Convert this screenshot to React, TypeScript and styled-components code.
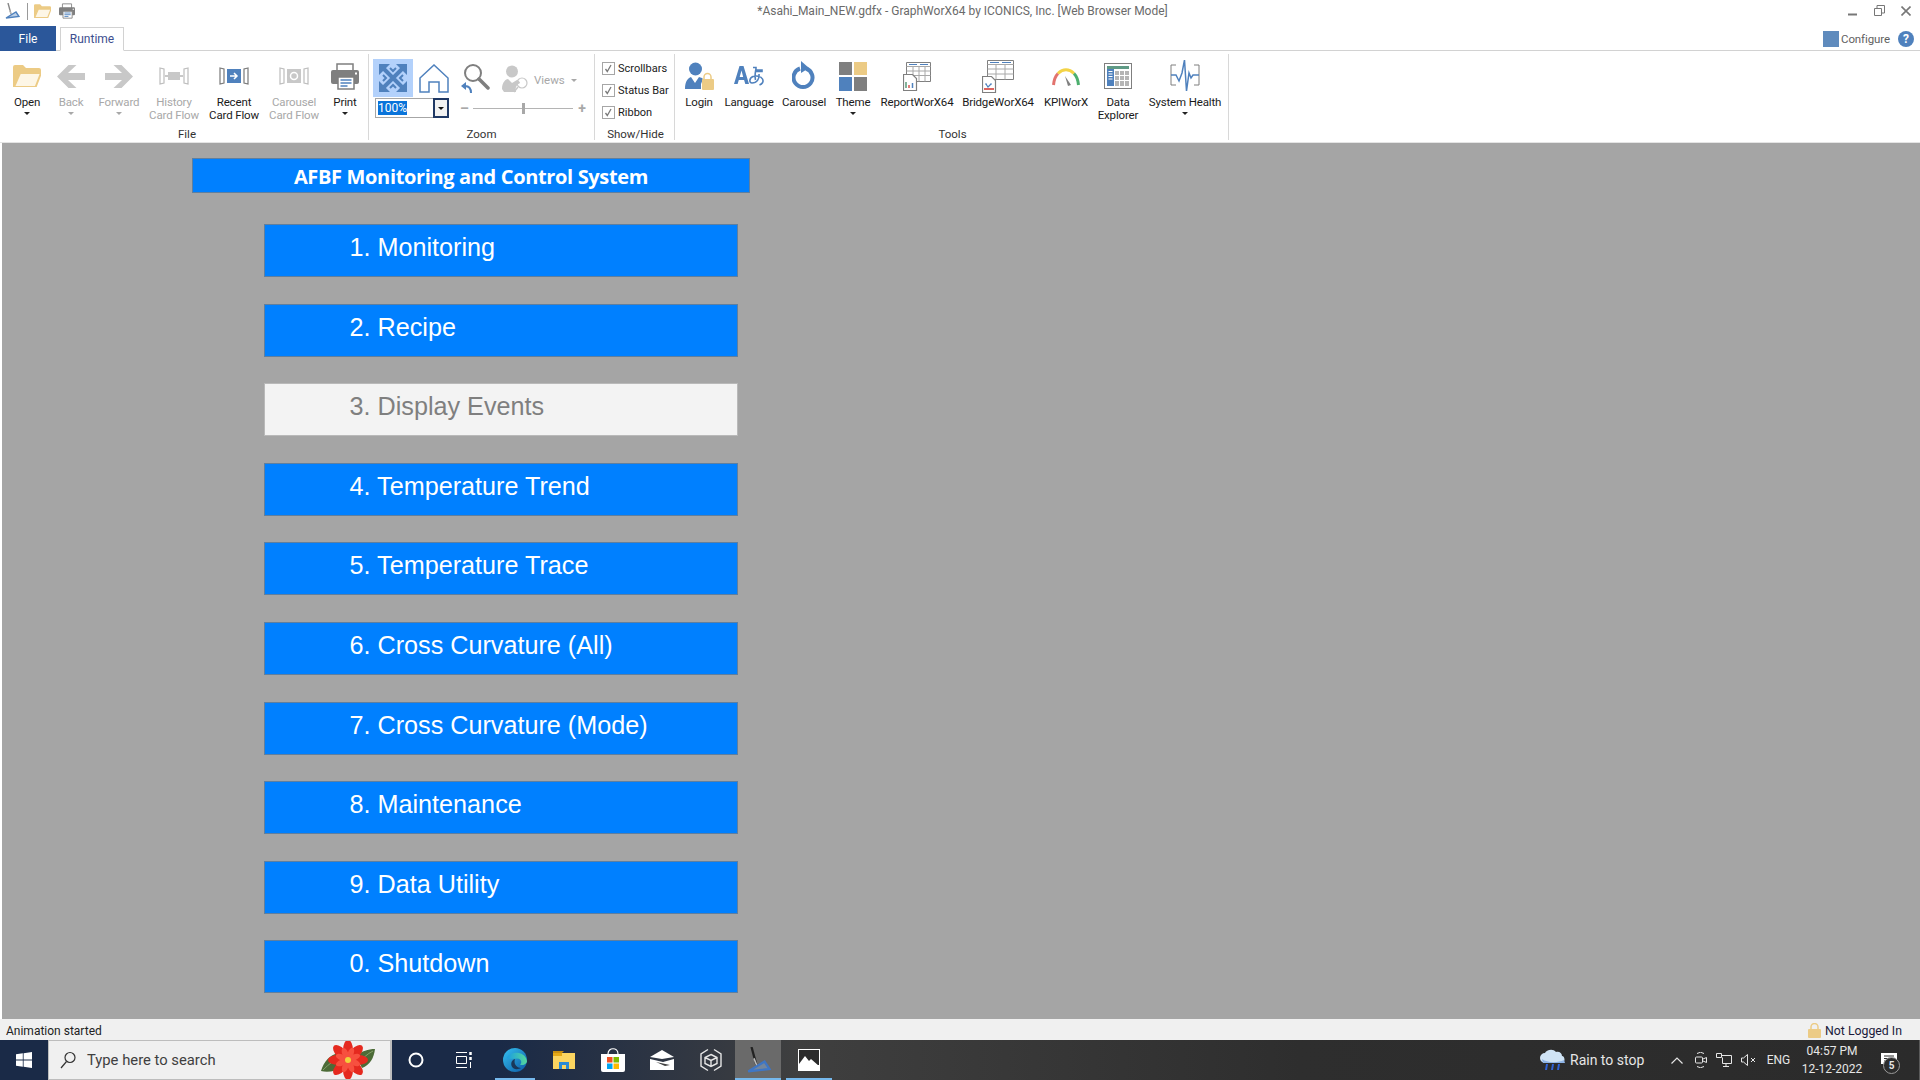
import React from 'react'
import styled, { createGlobalStyle } from 'styled-components'

const UI_FONT = 'Roboto, "Liberation Sans", sans-serif'
const BLUE = '#4f81bd'
const GREY = '#7f7f7f'
const OFF = '#c8c8c8'
const GOLD = '#eccb85'

const Global = createGlobalStyle`
  html, body {
    margin: 0;
    padding: 0;
    overflow: hidden;
    background: #fff;
  }
  svg {
    display: block;
  }
`

const Window = styled.div`
  width: 1920px;
  height: 1080px;
  display: flex;
  flex-direction: column;
  font-family: ${UI_FONT};
  font-size: 12px;
  color: #1a1a1a;
  background: #fff;
`

const TitleBar = styled.div`
  height: 26px;
  display: grid;
  grid-template-columns: 1fr auto 1fr;
  align-items: center;
`

const QuickAccess = styled.div`
  display: flex;
  align-items: center;
  gap: 8px;
  padding-left: 4px;
  margin-top: -4px;
`

const QuickDivider = styled.div`
  width: 1px;
  height: 17px;
  background: #9a9a9a;
  margin: 0 -2px 0 -1px;
`

const WindowTitle = styled.div`
  font-size: 12px;
  color: #6a6a6a;
  padding-left: 5px;
  margin-top: -5px;
`

const WindowButtons = styled.div`
  display: flex;
  justify-content: flex-end;
  align-items: center;
  gap: 16px;
  padding-right: 9px;
  margin-top: -5px;
`

const TabRow = styled.div`
  height: 25px;
  box-sizing: border-box;
  display: flex;
  align-items: flex-end;
  border-bottom: 1px solid #d2d2d2;
`

const FileTab = styled.div`
  width: 56px;
  height: 25px;
  margin-bottom: -1px;
  background: #2b579a;
  color: #fff;
  display: flex;
  align-items: center;
  justify-content: center;
`

const RuntimeTab = styled.div`
  width: 64px;
  height: 24px;
  box-sizing: border-box;
  margin: 0 0 -1px 4px;
  border: 1px solid #d2d2d2;
  border-bottom: 1px solid #fff;
  color: #3d4f8f;
  display: flex;
  align-items: center;
  justify-content: center;
`

const Configure = styled.div`
  margin-left: auto;
  display: flex;
  align-items: center;
  padding: 0 6px 3px 0;
  color: #5f5f5f;
  font-size: 11.5px;
  letter-spacing: -0.1px;
`

const ConfigureSwatch = styled.div`
  width: 16px;
  height: 16px;
  background: #5f8bbd;
  margin-right: 2px;
`

const HelpBadge = styled.div`
  width: 16px;
  height: 16px;
  margin-left: 8px;
  border-radius: 50%;
  background: #4f81bd;
  color: #fff;
  font-size: 12px;
  font-weight: 700;
  display: flex;
  align-items: center;
  justify-content: center;
`

const Ribbon = styled.div`
  height: 92px;
  box-sizing: border-box;
  padding-top: 3px;
  display: flex;
  align-items: flex-start;
  border-bottom: 1px solid #e4e4e4;
`

const Group = styled.div<{ $w: number }>`
  width: ${({ $w }) => $w}px;
  height: 86px;
  box-sizing: border-box;
  flex: none;
  display: flex;
  flex-direction: column;
  border-right: 1px solid #d8d8d8;
`

const GroupBody = styled.div<{ $pad?: number }>`
  flex: 1;
  min-height: 0;
  display: flex;
  padding-left: ${({ $pad }) => $pad ?? 0}px;
`

const GroupLabel = styled.div<{ $pad?: number }>`
  height: 16px;
  line-height: 16px;
  margin-bottom: -2px;
  padding-left: ${({ $pad }) => $pad ?? 0}px;
  text-align: center;
  font-size: 11.5px;
  color: #333;
`

const Item = styled.div<{ $w: number; $off?: boolean }>`
  width: ${({ $w }) => $w}px;
  flex: none;
  padding-top: 3px;
  display: flex;
  flex-direction: column;
  align-items: center;
  color: ${({ $off }) => ($off ? '#a8a8a8' : '#1a1a1a')};
`

const IconSlot = styled.div`
  height: 38px;
  display: flex;
  align-items: center;
  justify-content: center;
`

const ItemLabel = styled.div`
  margin-top: 1px;
  font-size: 11.5px;
  line-height: 13px;
  text-align: center;
  white-space: pre-line;
  letter-spacing: -0.15px;
`

const Caret = styled.div<{ $off?: boolean }>`
  width: 0;
  height: 0;
  margin-top: 3px;
  border-left: 3px solid transparent;
  border-right: 3px solid transparent;
  border-top: 3px solid ${({ $off }) => ($off ? '#a8a8a8' : '#222')};
`

const ZoomBody = styled.div`
  padding: 5px 0 0 4px;
  display: flex;
  flex-direction: column;
`

const ZoomTools = styled.div`
  height: 38px;
  display: flex;
  align-items: center;
`

const FitButton = styled.div`
  width: 40px;
  height: 38px;
  background: #b3d1fb;
  display: flex;
  align-items: center;
  justify-content: center;
`

const ZoomCell = styled.div<{ $w: number; $shift?: number }>`
  width: ${({ $w }) => $w}px;
  box-sizing: border-box;
  padding: ${({ $shift }) => $shift ?? 0}px 0 0 ${({ $shift }) => ($shift ?? 0) * 2}px;
  display: flex;
  align-items: center;
  justify-content: center;
`

const ViewsText = styled.span`
  color: #a8a8a8;
  margin: 4px 0 0 1px;
  font-size: 11.5px;
`

const ViewsCaret = styled(Caret)`
  margin: 4px 0 0 6px;
`

const ZoomControls = styled.div`
  height: 20px;
  margin: 1px 0 0 2px;
  display: flex;
  align-items: center;
`

const Combo = styled.div`
  width: 74px;
  height: 20px;
  box-sizing: border-box;
  display: flex;
  border: 1px solid #a6a6a6;
`

const ComboField = styled.div`
  flex: 1;
  padding: 2px 0 0 2px;
`

const ComboValue = styled.span`
  display: inline-block;
  height: 14px;
  line-height: 14px;
  background: #0a74da;
  color: #fff;
  font-size: 12px;
`

const ComboButton = styled.div`
  width: 16px;
  box-sizing: border-box;
  margin: -1px -1px -1px 0;
  border: 2px solid #1f3864;
  background: #f2f2f2;
  display: flex;
  align-items: center;
  justify-content: center;
`

const ComboCaret = styled(Caret)`
  margin: 0;
  border-top-color: #111;
`

const Slider = styled.div`
  margin-left: 11px;
  width: 126px;
  display: flex;
  align-items: center;
  gap: 5px;
  color: #a8a8a8;
  font-weight: 700;
`

const SliderGlyph = styled.span`
  width: 8px;
  text-align: center;
  font-size: 14px;
  line-height: 14px;
`

const SliderTrack = styled.div`
  position: relative;
  flex: 1;
  height: 1px;
  background: #b4b4b4;
`

const SliderThumb = styled.div`
  position: absolute;
  left: 49%;
  top: -5px;
  width: 3px;
  height: 11px;
  background: #a8a8a8;
`

const Checks = styled.div`
  padding: 3px 0 0 7px;
  display: flex;
  flex-direction: column;
`

const CheckRow = styled.div`
  height: 22px;
  display: flex;
  align-items: center;
  gap: 3px;
  font-size: 11px;
`

const CheckBox = styled.div`
  width: 13px;
  height: 13px;
  box-sizing: border-box;
  border: 1px solid #a6a6a6;
  display: flex;
  align-items: center;
  justify-content: center;
`

const Canvas = styled.main`
  flex: 1;
  min-height: 0;
  margin-left: 2px;
  background: #a5a5a5;
  padding: 15px 0 0 190px;
`

const Banner = styled.h1`
  width: 558px;
  height: 35px;
  box-sizing: border-box;
  margin: 0;
  background: #0080ff;
  border: 1px solid #5f7f9f;
  color: #fff;
  font-size: 20px;
  font-weight: 700;
  line-height: 35px;
  text-align: center;
  font-family: "Open Sans", sans-serif;
  letter-spacing: -0.35px;
`

const Menu = styled.nav`
  width: 474px;
  margin: 31px 0 0 72px;
  display: flex;
  flex-direction: column;
  gap: 26.6px;
`

const MenuButton = styled.div<{ $off?: boolean }>`
  height: 53px;
  box-sizing: border-box;
  padding: 7px 0 0 84.500px;
  font-family: "Liberation Sans", Arial, sans-serif;
  font-size: 25.2px;
  line-height: 30px;
  background: ${({ $off }) => ($off ? '#f3f3f3' : '#0080ff')};
  color: ${({ $off }) => ($off ? '#7f7f7f' : '#fff')};
  border: 1px solid ${({ $off }) => ($off ? '#b9b9b9' : '#5f7f9f')};
`

const StatusBar = styled.footer`
  height: 21px;
  box-sizing: border-box;
  background: #f0f0f0;
  display: flex;
  align-items: center;
  justify-content: space-between;
  padding: 2px 18px 0 6px;
  font-size: 12px;
  color: #222;
`

const LoginState = styled.div`
  display: flex;
  align-items: center;
  gap: 4px;
  color: #1a1a3a;
  font-size: 12.3px;
`

const Taskbar = styled.div`
  height: 40px;
  display: flex;
  color: #e6e6e6;
  background: linear-gradient(90deg, #1a2a47 0, #1a2a47 500px, #3f3f3f 800px, #2e2e2e 1300px, #2b2b2b 100%);
`

const StartCell = styled.div`
  width: 48px;
  display: flex;
  align-items: center;
  justify-content: center;
  background: #1a2a47;
`

const SearchBox = styled.div`
  width: 344px;
  box-sizing: border-box;
  background: #f0f0f0;
  border: 1px solid #bdbdbd;
  border-width: 1px 2px 1px 1px;
  display: flex;
  align-items: center;
  position: relative;
  padding-left: 11px;
  gap: 11px;
  color: #3f3f3f;
  font-size: 14.8px;
`

const SearchArt = styled.div`
  position: absolute;
  right: 14px;
  top: 0;
`

const BarCell = styled.div<{ $w: number; $open?: boolean; $active?: boolean }>`
  position: relative;
  width: ${({ $w }) => $w}px;
  flex: none;
  display: flex;
  align-items: center;
  justify-content: center;
  background: ${({ $active }) => ($active ? '#6a6a6a' : 'transparent')};
  &::after {
    content: '';
    display: ${({ $open }) => ($open ? 'block' : 'none')};
    position: absolute;
    left: ${({ $active }) => ($active ? 0 : 5)}px;
    right: ${({ $active }) => ($active ? 0 : 5)}px;
    bottom: 0;
    height: 2px;
    background: #76b9ed;
  }
`

const BarGap = styled.div`
  width: 4px;
  flex: none;
`

const Tray = styled.div`
  margin-left: auto;
  display: flex;
  align-items: stretch;
  padding-right: 10px;
  box-shadow: inset -1px 0 0 #5a5a5a;
`

const TrayText = styled.div<{ $w: number; $size: number }>`
  width: ${({ $w }) => $w}px;
  flex: none;
  display: flex;
  align-items: center;
  font-size: ${({ $size }) => $size}px;
`

const TrayLang = styled(TrayText)`
  justify-content: center;
`

const Clock = styled.div`
  width: 70px;
  flex: none;
  display: flex;
  flex-direction: column;
  align-items: center;
  justify-content: center;
  gap: 3px;
  font-size: 12px;
  line-height: 15px;
  text-align: center;
`

const BadgeRing = styled.div`
  position: absolute;
  left: 16px;
  top: 17px;
  width: 15px;
  height: 15px;
  border-radius: 50%;
  border: 1px solid #9a9a9a;
  background: #2b2b2b;
  color: #e6e6e6;
  font-size: 10px;
  font-weight: 700;
  display: flex;
  align-items: center;
  justify-content: center;
`

// icons, drawn to roughly the pixel size they have in the ribbon

const Compass = ({ size = 16, body = '#888', accent = '#4f81bd' }) => (
  <svg width={size} height={size} viewBox="0 0 16 16" fill="none">
    <path d="M4 0l3 11" stroke={body} strokeWidth="1.4" />
    <path d="M5.5 7l2 5" stroke="#bbb" strokeWidth="1" />
    <path d="M2 15l13-1.5L12 9z" stroke={accent} strokeWidth="1.4" fill="#7ba1cf" fillOpacity=".5" />
  </svg>
)

const FolderOpen = ({ w = 28, h = 22, color = GOLD }) => (
  <svg width={w} height={h} viewBox="0 0 28 22">
    <path d="M0 2a2 2 0 0 1 2-2h8l3 3h13a2 2 0 0 1 2 2v3H7L1 22H0z" fill={color} />
    <path d="M7 8h21l-5 13a1.5 1.5 0 0 1-1 1H1z" fill="#fdf6e6" stroke={color} strokeWidth="2" />
  </svg>
)

const Printer = ({ w = 28, h = 27 }) => (
  <svg width={w} height={h} viewBox="0 0 28 27">
    <path d="M6 1h16v8H6z" fill="#fff" stroke={GREY} strokeWidth="1.5" />
    <path d="M2 7h24a2 2 0 0 1 2 2v10a2 2 0 0 1-2 2H2a2 2 0 0 1-2-2V9a2 2 0 0 1 2-2z" fill={GREY} />
    <path d="M7 14h16v12H7z" fill="#fff" stroke={GREY} strokeWidth="1.5" />
    <path d="M9.500 17h11M9.500 20h11M9.500 23h7" stroke={BLUE} strokeWidth="1.600" />
    <rect x="24" y="9.500" width="2" height="2" fill="#fff" />
  </svg>
)

const ArrowIcon = ({ flip = false }) => (
  <svg width="28" height="23" viewBox="0 0 28 23" style={flip ? { transform: 'scaleX(-1)' } : undefined}>
    <path d="M0 11.5L11.5 0h8L11 8h17v7H11l8.500 8h-8z" fill={OFF} />
  </svg>
)

const CardFlow = ({ children, frame }: { children: React.ReactNode; frame: string }) => (
  <svg width="30" height="20" viewBox="0 0 30 20" fill="none">
    <path d="M1 2l4 1v14l-4 1zM29 2l-4 1v14l4 1z" stroke={frame} strokeWidth="1.2" />
    {children}
  </svg>
)

const Fit = () => (
  <svg width="28" height="28" viewBox="0 0 28 28" fill="none" stroke={BLUE}>
    <path d="M5 5l18 18M23 5L5 23" strokeWidth="4" />
    <path d="M0 11V0h11zM28 11V0H17zM0 17v11h11zM28 17v11H17z" fill={BLUE} stroke="none" />
    <path d="M11 4l3 3 3-3M11 24l3-3 3 3M4 11l3 3-3 3M24 11l-3 3 3 3" strokeWidth="2" />
  </svg>
)

const Home = () => (
  <svg width="30" height="29" viewBox="0 0 30 29" fill="none" stroke={BLUE} strokeWidth="1.5">
    <path d="M1 14L15 1l14 13v14h-9V18H10v10H1z" />
  </svg>
)

const Magnifier = () => (
  <svg width="30" height="31" viewBox="0 0 30 31" fill="none">
    <circle cx="13" cy="10" r="8" stroke={GREY} strokeWidth="2" />
    <path d="M19 16l9 9" stroke={GREY} strokeWidth="3.500" strokeLinecap="round" />
    <path d="M11 30c0-5-2-7-6-7" stroke={BLUE} strokeWidth="2" />
    <path d="M1 23l5-4v8z" fill={BLUE} />
  </svg>
)

const ViewsIcon = () => (
  <svg width="28" height="28" viewBox="0 0 28 28" fill="none">
    <circle cx="10" cy="6.500" r="6" fill={OFF} />
    <path d="M0 24c0-7 4-10 6-10l4 4 5-3c2 1 3 2 3 3-4 2-5 5-4 9H2z" fill={OFF} />
    <circle cx="20" cy="18" r="5" stroke={OFF} strokeWidth="1.2" />
    <path d="M16 22l-4 5" stroke={OFF} strokeWidth="1.500" />
  </svg>
)

const Tick = () => (
  <svg width="9" height="9" viewBox="0 0 9 9" fill="none">
    <path d="M1.500 5l1.800 2.500L7 1" stroke="#7a7a7a" strokeWidth="1.300" />
  </svg>
)

const Login = () => (
  <svg width="29" height="29" viewBox="0 0 29 29">
    <circle cx="10.500" cy="7" r="6.500" fill={BLUE} />
    <path d="M0 27c0-8 3-11 6-12l4 6 4-6c2 .5 3 1 4 2l-2 5v5H1z" fill={BLUE} />
    <path d="M19 18v-3a3.500 3.500 0 0 1 7 0v3" fill="none" stroke={GOLD} strokeWidth="1.500" />
    <rect x="17" y="17" width="12" height="11" rx="1" fill={GOLD} />
  </svg>
)

const Language = () => (
  <svg width="30" height="20" viewBox="0 0 30 20" fill={BLUE}>
    <path d="M5.500 0h4L15 18h-3.700l-1.200-4H4.800l-1.200 4H0zM5.700 11h3.500L7.500 4.500z" />
    <path d="M19 1.500h3c0 1 0 1.800-.2 2.500H28v1.500h-6.500C21 8 21 11 21.500 14M25 8c.5 5-2 9-7 9-3 0-3-5 1-6.500 3-1 8-.5 9.500 2.500s-.5 5-3 6" fill="none" stroke={BLUE} strokeWidth="1.600" />
  </svg>
)

const CarouselIcon = () => (
  <svg width="24" height="30" viewBox="0 0 24 30" fill="none">
    <path d="M14 7.500a9.500 9.500 0 1 1-6 0" stroke={BLUE} strokeWidth="4" />
    <path d="M9 0l8 7-8 5z" fill={BLUE} />
  </svg>
)

const Theme = () => (
  <svg width="28" height="29" viewBox="0 0 28 29">
    <rect width="13" height="13" fill={GREY} />
    <rect x="15" width="13" height="13" fill={GOLD} />
    <rect y="15" width="13" height="14" fill={BLUE} />
    <rect x="15" y="15" width="13" height="14" fill={GREY} />
  </svg>
)

const Report = () => (
  <svg width="28" height="29" viewBox="0 0 28 29" fill="none">
    <path d="M3.500 .5h24v19h-24z" fill="#fff" stroke={GREY} />
    <path d="M3.500 4.500h24M3.500 9h24M3.500 13.500h24M10 4.500v15M16 4.500v15M22 4.500v15" stroke="#a8a8a8" />
    <path d="M6 2.500h8M17 2.500h8" stroke={BLUE} />
    <path d="M.5 12.500h9l4 4v12H.500z" fill="#fff" stroke={GREY} strokeWidth="1.200" />
    <path d="M3 26v-6" stroke="#5a9a7a" strokeWidth="1.500" />
    <path d="M6 26v-3" stroke="#d9534f" strokeWidth="1.500" />
    <path d="M9.500 26v-5" stroke={BLUE} strokeWidth="1.500" />
  </svg>
)

const Bridge = () => (
  <svg width="32" height="33" viewBox="0 0 32 33" fill="none">
    <path d="M5.500 .5h26v19h-26z" fill="#fff" stroke={GREY} />
    <path d="M5.500 4.500h26M5.500 9h26M5.500 14h26M14 4.500v15M23 4.500v15" stroke="#a8a8a8" />
    <path d="M8 2.500h9M20 2.500h9" stroke={BLUE} />
    <path d="M.5 16.500h9l4 4v12H.500z" fill="#fff" stroke={GREY} strokeWidth="1.200" />
    <path d="M3 24h2M8 24h2M4 24l2 3 3-3" stroke={BLUE} strokeWidth="1.200" />
    <path d="M2 29h10" stroke="#d9534f" strokeWidth="1.800" />
  </svg>
)

const Gauge = () => (
  <svg width="28" height="20" viewBox="0 0 28 20" fill="none">
    <path d="M1.500 19C2 14 3.500 10 6 7.500" stroke="#e2736e" strokeWidth="3" />
    <path d="M6 7.500C11 2.500 17 2.500 22 7.500" stroke="#f3d346" strokeWidth="3" />
    <path d="M22 7.500c2.500 2.500 4 6.500 4.500 11.500" stroke="#4caf6e" strokeWidth="3" />
    <path d="M13 10l6 9-3 1z" fill={GREY} />
  </svg>
)

const DataGrid = () => (
  <svg width="28" height="26" viewBox="0 0 28 26">
    <rect x=".5" y=".5" width="27" height="25" fill="#fff" stroke={GREY} />
    <rect x="3" y="3" width="22" height="3" fill="#5f9a85" />
    <rect x="3" y="6" width="7" height="17" fill={BLUE} />
    <rect x="11" y="8" width="14" height="15" fill="#b5b5b5" />
    <path d="M11 12.500h14M11 17.500h14M15.500 8v15M20.500 8v15" stroke="#fff" />
    <path d="M4.500 8.500h4M4.500 11h4M4.500 13.500h4M4.500 16h4" stroke="#fff" />
  </svg>
)

const Health = () => (
  <svg width="30" height="32" viewBox="0 0 30 32" fill="none">
    <path d="M6 5H1v20h5M24 5h5v20h-5" stroke={GREY} />
    <path d="M1 15h5l3 6 3-8 2.500-13 2 31 2.500-18 2 5 2-3h6" stroke={BLUE} strokeWidth="1.500" />
  </svg>
)

const WinLogo = () => (
  <svg width="16" height="16" viewBox="0 0 16 16" fill="#fff">
    <path d="M0 2.300L6.800 1.300v6.300H0zM7.600 1.200L16 0v7.600H7.600zM0 8.400h6.800v6.300L0 13.700zM7.600 8.400H16V16l-8.400-1.200z" />
  </svg>
)

const SearchGlass = () => (
  <svg width="16" height="18" viewBox="0 0 16 18" fill="none" stroke="#333" strokeWidth="1.200">
    <circle cx="10" cy="6.500" r="5" />
    <path d="M6.500 10.500L1 17" />
  </svg>
)

const PETALS = [0, 45, 90, 135, 180, 225, 270, 315]

const Poinsettia = () => (
  <svg width="56" height="38" viewBox="0 0 56 38">
    <path d="M1 30C4 20 10 14 18 12l6 14C16 30 8 32 1 30zM55 8c-1 9-5 16-13 19l-6-12c6-5 12-7 19-7z" fill="#4c6b37" />
    <path d="M3 29c6-6 11-10 18-13M53 10c-6 3-10 7-14 12" stroke="#84a06a" fill="none" />
    {PETALS.map((angle) => (
      <ellipse key={angle} cx="28" cy="9" rx="5" ry="10" fill="#e5291f" transform={`rotate(${angle} 28 19)`} />
    ))}
    {PETALS.map((angle) => (
      <ellipse key={angle} cx="28" cy="12" rx="3" ry="6" fill="#f7503f" transform={`rotate(${angle + 22} 28 19)`} />
    ))}
    <circle cx="28" cy="19" r="3" fill="#f2d23c" />
  </svg>
)

const Cortana = () => (
  <svg width="16" height="16" viewBox="0 0 16 16" fill="none">
    <circle cx="8" cy="8" r="6.500" stroke="#fff" strokeWidth="2" />
  </svg>
)

const TaskView = () => (
  <svg width="17" height="16" viewBox="0 0 17 16" fill="none" stroke="#fff">
    <path d="M1 .5h11M1 15.500h11M1.500 4.500h10v7h-10z" />
    <path d="M15.500 0v3M15.500 5v3" strokeWidth="2.500" />
    <path d="M15.500 10v6" />
  </svg>
)

const Edge = () => (
  <svg width="24" height="24" viewBox="0 0 24 24">
    <defs>
      <linearGradient id="edgeA" x1="0" y1="0" x2="1" y2="1">
        <stop offset="0" stopColor="#35c1f1" />
        <stop offset="1" stopColor="#0c59a4" />
      </linearGradient>
      <linearGradient id="edgeB" x1="0" y1="0" x2="1" y2="0">
        <stop offset="0" stopColor="#1b9de2" />
        <stop offset="1" stopColor="#55d89a" />
      </linearGradient>
    </defs>
    <circle cx="12" cy="12" r="12" fill="url(#edgeA)" />
    <path d="M4 10C6 3 22 2 24 13c0 3-4 5-7 3.500 2-1 2-6-3-6-3 0-5 1-10-.500z" fill="url(#edgeB)" />
    <path d="M12 11c-4 1-5 6-2 9 3 2 6 1 8 0-3 0-8-3-6-9z" fill="#1a2a47" opacity=".85" />
  </svg>
)

const Explorer = () => (
  <svg width="22" height="18" viewBox="0 0 22 18">
    <path d="M0 2h9l2-2H0z" fill="#c88f10" />
    <rect y="2" width="22" height="16" fill="#fbd560" />
    <path d="M0 2h9v3H0z" fill="#e5a916" />
    <path d="M6 11h10v7h-3v-4H9v4H6z" fill="#2a8ad4" />
  </svg>
)

const Store = () => (
  <svg width="24" height="24" viewBox="0 0 24 24">
    <path d="M7 6c0-7 10-7 10 0" fill="none" stroke="#fff" strokeWidth="1.200" />
    <path d="M0 6h24v16a2 2 0 0 1-2 2H2a2 2 0 0 1-2-2z" fill="#fff" />
    <rect x="6" y="9" width="5.500" height="5.500" fill="#f25022" />
    <rect x="12.500" y="9" width="5.500" height="5.500" fill="#7fba00" />
    <rect x="6" y="15.500" width="5.500" height="5.500" fill="#00a4ef" />
    <rect x="12.500" y="15.500" width="5.500" height="5.500" fill="#ffb900" />
  </svg>
)

const Mail = () => (
  <svg width="24" height="20" viewBox="0 0 24 20" fill="#fff">
    <path d="M0 7L12 0l12 7-12 2z" />
    <path d="M0 9l13 3 11-3v11H0z" />
    <path d="M6 12l14 3-5 1z" fill="#3f3f3f" />
  </svg>
)

const CubeHex = () => (
  <svg width="22" height="24" viewBox="0 0 22 24" fill="none" stroke="#e6e6e6" strokeWidth="1.400">
    <path d="M8 1.500L1 6v12l7 4.500M14 1.500L21 6v12l-7 4.500" />
    <path d="M11 6.500l6 3v6l-6 3-6-3v-6zM5 9.500l6 3 6-3M11 12.500v6" />
  </svg>
)

const PhotoTile = () => (
  <svg width="22" height="22" viewBox="0 0 22 22">
    <rect x=".5" y=".5" width="21" height="21" fill="#2b2b2b" stroke="#fff" />
    <path d="M1 22V15l6-8 4 5 2-2 8 7v5z" fill="#fff" />
    <rect x="1" y="16" width="20" height="6" fill="#fff" />
  </svg>
)

const RainCloud = () => (
  <svg width="26" height="22" viewBox="0 0 26 22">
    <path d="M5 14a5 5 0 0 1 0-10c1-3 8-5 11-1 3-1 6 1 6 4 3 0 4 7-1 7z" fill="#cfe3f5" />
    <path d="M2 10c5 4 16 4 22 1l1 3H3z" fill="#8fb4e6" />
    <path d="M6 15l2 0-1 6h-2zM12 15h2l-1 6h-2zM18 15h2l-1 6h-2z" fill="#2f62d6" />
  </svg>
)

const Chevron = () => (
  <svg width="12" height="7" viewBox="0 0 12 7" fill="none" stroke="#e6e6e6" strokeWidth="1.200">
    <path d="M.500 6.500L6 1l5.500 5.500" />
  </svg>
)

const Meet = () => (
  <svg width="12" height="16" viewBox="0 0 12 16" fill="none" stroke="#e6e6e6">
    <path d="M2 1.500a6 6 0 0 1 7 0M2 14.500a6 6 0 0 0 7 0" />
    <rect x=".5" y="5" width="7" height="6" rx="1" />
    <path d="M8 7l3.500-1.500v5L8 9" />
  </svg>
)

const Network = () => (
  <svg width="16" height="14" viewBox="0 0 16 14" fill="none" stroke="#e6e6e6">
    <path d="M.5 .5h5v4h-5zM5.500 2.500h10v8h-9V4.500M10 10.500v3M7 13.500h6" />
  </svg>
)

const Muted = () => (
  <svg width="15" height="12" viewBox="0 0 15 12" fill="none" stroke="#e6e6e6">
    <path d="M.5 4h2L6.500 .5v11L2.500 8h-2z" />
    <path d="M10 4l4 4M14 4l-4 4" />
  </svg>
)

const Notice = () => (
  <svg width="16" height="14" viewBox="0 0 16 14">
    <path d="M0 0h16v11H7l-3 3v-3H0z" fill="#fff" />
    <path d="M3 3h10M3 5.500h10M3 8h7" stroke="#2b2b2b" />
  </svg>
)

const Lock = ({ size = 14 }) => (
  <svg width={size - 1} height={size + 1} viewBox="0 0 13 15" fill="none">
    <path d="M3 7V4a3.500 3.500 0 0 1 7 0v3" stroke={GOLD} strokeWidth="1.500" />
    <rect y="6" width="13" height="9" rx="1" fill={GOLD} />
  </svg>
)

const MENU = [
  '1. Monitoring',
  '2. Recipe',
  '3. Display Events',
  '4. Temperature Trend',
  '5. Temperature Trace',
  '6. Cross Curvature (All)',
  '7. Cross Curvature (Mode)',
  '8. Maintenance',
  '9. Data Utility',
  '0. Shutdown'
]

const FILE_ITEMS = [
  { w: 44, label: 'Open', caret: true, icon: <FolderOpen /> },
  { w: 44, label: 'Back', caret: true, off: true, icon: <ArrowIcon /> },
  { w: 52, label: 'Forward', caret: true, off: true, icon: <ArrowIcon flip /> },
  {
    w: 58,
    label: 'History\nCard Flow',
    off: true,
    icon: (
      <CardFlow frame="#bdbdbd">
        <rect x="9" y="6" width="12" height="8" fill={OFF} />
        <path d="M9 10H6M21 10h3" stroke={OFF} strokeWidth="2" />
      </CardFlow>
    )
  },
  {
    w: 62,
    label: 'Recent\nCard Flow',
    icon: (
      <CardFlow frame="#7a7a7a">
        <rect x="8" y="3" width="14" height="14" fill={BLUE} />
        <path d="M11 10h7M15 7l3 3-3 3" stroke="#fff" strokeWidth="1.500" />
      </CardFlow>
    )
  },
  {
    w: 58,
    label: 'Carousel\nCard Flow',
    off: true,
    icon: (
      <CardFlow frame="#bdbdbd">
        <rect x="8" y="3" width="14" height="14" fill={OFF} />
        <circle cx="15" cy="10" r="3.500" fill="none" stroke="#fff" strokeWidth="1.500" />
      </CardFlow>
    )
  },
  { w: 44, label: 'Print', caret: true, icon: <Printer /> }
]

const TOOL_ITEMS = [
  { w: 44, label: 'Login', icon: <Login /> },
  { w: 56, label: 'Language', icon: <Language /> },
  { w: 54, label: 'Carousel', icon: <CarouselIcon /> },
  { w: 44, label: 'Theme', caret: true, icon: <Theme /> },
  { w: 84, label: 'ReportWorX64', icon: <Report /> },
  { w: 78, label: 'BridgeWorX64', icon: <Bridge /> },
  { w: 58, label: 'KPIWorX', icon: <Gauge /> },
  { w: 46, label: 'Data\nExplorer', icon: <DataGrid /> },
  { w: 88, label: 'System Health', caret: true, icon: <Health /> }
]

type RibbonItem = {
  w: number
  label: string
  icon: React.ReactNode
  caret?: boolean
  off?: boolean
}

const renderItem = ({ w, label, icon, caret, off }: RibbonItem) => (
  <Item key={label} $w={w} $off={off}>
    <IconSlot>{icon}</IconSlot>
    <ItemLabel>{label}</ItemLabel>
    {caret && <Caret $off={off} />}
  </Item>
)

const App = () => (
  <Window>
    <Global />
    <TitleBar>
      <QuickAccess>
        <Compass />
        <QuickDivider />
        <FolderOpen w={17} h={14} />
        <Printer w={16} h={16} />
      </QuickAccess>
      <WindowTitle>*Asahi_Main_NEW.gdfx - GraphWorX64 by ICONICS, Inc. [Web Browser Mode]</WindowTitle>
      <WindowButtons>
        <svg width="10" height="10" viewBox="0 0 10 10">
          <path d="M0 8.500h9" stroke="#777" strokeWidth="2" />
        </svg>
        <svg width="11" height="11" viewBox="0 0 11 11" fill="none" stroke="#777">
          <path d="M.5 3.500h7v7h-7zM3 3V.5h7.500V8H8" />
        </svg>
        <svg width="10" height="10" viewBox="0 0 10 10" stroke="#777" strokeWidth="1.600">
          <path d="M.5 .5l9 9M9.500 .5l-9 9" />
        </svg>
      </WindowButtons>
    </TitleBar>

    <TabRow>
      <FileTab>File</FileTab>
      <RuntimeTab>Runtime</RuntimeTab>
      <Configure>
        <ConfigureSwatch />
        Configure
        <HelpBadge>?</HelpBadge>
      </Configure>
    </TabRow>

    <Ribbon>
      <Group $w={369}>
        <GroupBody $pad={5}>{FILE_ITEMS.map(renderItem)}</GroupBody>
        <GroupLabel $pad={6}>File</GroupLabel>
      </Group>

      <Group $w={226}>
        <GroupBody>
          <ZoomBody>
            <ZoomTools>
              <FitButton>
                <Fit />
              </FitButton>
              <ZoomCell $w={42}>
                <Home />
              </ZoomCell>
              <ZoomCell $w={40}>
                <Magnifier />
              </ZoomCell>
              <ZoomCell $w={38} $shift={2}>
                <ViewsIcon />
              </ZoomCell>
              <ViewsText>Views</ViewsText>
              <ViewsCaret $off />
            </ZoomTools>
            <ZoomControls>
              <Combo>
                <ComboField>
                  <ComboValue>100%</ComboValue>
                </ComboField>
                <ComboButton>
                  <ComboCaret />
                </ComboButton>
              </Combo>
              <Slider>
                <SliderGlyph>–</SliderGlyph>
                <SliderTrack>
                  <SliderThumb />
                </SliderTrack>
                <SliderGlyph>+</SliderGlyph>
              </Slider>
            </ZoomControls>
          </ZoomBody>
        </GroupBody>
        <GroupLabel>Zoom</GroupLabel>
      </Group>

      <Group $w={80}>
        <GroupBody>
          <Checks>
            {['Scrollbars', 'Status Bar', 'Ribbon'].map((name) => (
              <CheckRow key={name}>
                <CheckBox>
                  <Tick />
                </CheckBox>
                {name}
              </CheckRow>
            ))}
          </Checks>
        </GroupBody>
        <GroupLabel $pad={2}>Show/Hide</GroupLabel>
      </Group>

      <Group $w={554}>
        <GroupBody $pad={2}>{TOOL_ITEMS.map(renderItem)}</GroupBody>
        <GroupLabel $pad={2}>Tools</GroupLabel>
      </Group>
    </Ribbon>

    <Canvas>
      <Banner>AFBF Monitoring and Control System</Banner>
      <Menu>
        {MENU.map((label) => (
          <MenuButton key={label} $off={label.startsWith('3.')}>
            {label}
          </MenuButton>
        ))}
      </Menu>
    </Canvas>

    <StatusBar>
      <span>Animation started</span>
      <LoginState>
        <Lock />
        Not Logged In
      </LoginState>
    </StatusBar>

    <Taskbar>
      <StartCell>
        <WinLogo />
      </StartCell>
      <SearchBox>
        <SearchGlass />
        Type here to search
        <SearchArt>
          <Poinsettia />
        </SearchArt>
      </SearchBox>
      <BarCell $w={48}>
        <Cortana />
      </BarCell>
      <BarCell $w={46}>
        <TaskView />
      </BarCell>
      <BarGap />
      <BarCell $w={50} $open>
        <Edge />
      </BarCell>
      <BarCell $w={48}>
        <Explorer />
      </BarCell>
      <BarCell $w={49}>
        <Store />
      </BarCell>
      <BarCell $w={50}>
        <Mail />
      </BarCell>
      <BarCell $w={48}>
        <CubeHex />
      </BarCell>
      <BarCell $w={46} $open $active>
        <Compass size={26} body="#222" accent="#3f76c4" />
      </BarCell>
      <BarCell $w={56} $open>
        <PhotoTile />
      </BarCell>

      <Tray>
        <BarCell $w={34}>
          <RainCloud />
        </BarCell>
        <TrayText $w={94} $size={14}>
          Rain to stop
        </TrayText>
        <BarCell $w={25}>
          <Chevron />
        </BarCell>
        <BarCell $w={23}>
          <Meet />
        </BarCell>
        <BarCell $w={24}>
          <Network />
        </BarCell>
        <BarCell $w={24}>
          <Muted />
        </BarCell>
        <TrayLang $w={37} $size={12}>
          ENG
        </TrayLang>
        <Clock>
          <span>04:57 PM</span>
          <span>12-12-2022</span>
        </Clock>
        <BarCell $w={43}>
          <Notice />
          <BadgeRing>5</BadgeRing>
        </BarCell>
      </Tray>
    </Taskbar>
  </Window>
)

export default App
